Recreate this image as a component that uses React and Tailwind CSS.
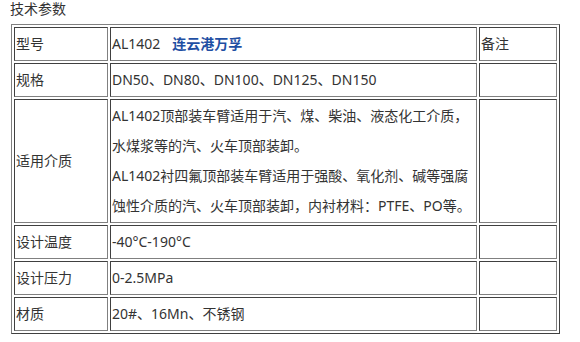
export default function App() {
  const font = { fontFamily: '"Noto Sans", "Noto Sans CJK SC", sans-serif' };
  const cellBase =
    "border border-solid border-t-[#404040] border-l-[#404040] border-b-[#808080] border-r-[#808080] p-[1px] align-middle text-left";
  const rows = [
    { label: "设计温度", value: "-40°C-190°C" },
    { label: "设计压力", value: "0-2.5MPa" },
    { label: "材质", value: "20#、16Mn、不锈钢" },
  ];
  return (
    <div className="w-[580px] h-[342px] bg-white text-[#333] text-[14px]" style={font}>
      <div className="h-[24px] pl-[10px] leading-[18px]">技术参数</div>
      <table className="ml-[11px] w-[549px] border-separate border-spacing-[2px] border border-solid border-t-[#808080] border-l-[#808080] border-b-[#404040] border-r-[#404040] leading-[30px] table-fixed">
        <colgroup>
          <col className="w-[94px]" />
          <col className="w-[367px]" />
          <col className="w-[78px]" />
        </colgroup>
        <tbody>
          <tr className="h-[34px]">
            <td className={cellBase}>型号</td>
            <td className={cellBase + " whitespace-nowrap"}>
              AL1402
              <span className="ml-[12px] font-bold text-[#1f4fa3]">连云港万孚</span>
            </td>
            <td className={cellBase}>备注</td>
          </tr>
          <tr className="h-[34px]">
            <td className={cellBase}>规格</td>
            <td className={cellBase + " whitespace-nowrap"}>DN50、DN80、DN100、DN125、DN150</td>
            <td className={cellBase}></td>
          </tr>
          <tr className="h-[124px]">
            <td className={cellBase}>适用介质</td>
            <td className={cellBase + " whitespace-nowrap"}>
              <div>AL1402顶部装车臂适用于汽、煤、柴油、液态化工介质，</div>
              <div>水煤浆等的汽、火车顶部装卸。</div>
              <div>AL1402衬四氟顶部装车臂适用于强酸、氧化剂、碱等强腐</div>
              <div>蚀性介质的汽、火车顶部装卸，内衬材料：PTFE、PO等。</div>
            </td>
            <td className={cellBase}></td>
          </tr>
          {rows.map((r) => (
            <tr key={r.label} className="h-[34px]">
              <td className={cellBase}>{r.label}</td>
              <td className={cellBase + " whitespace-nowrap"}>{r.value}</td>
              <td className={cellBase}></td>
            </tr>
          ))}
        </tbody>
      </table>
    </div>
  );
}
